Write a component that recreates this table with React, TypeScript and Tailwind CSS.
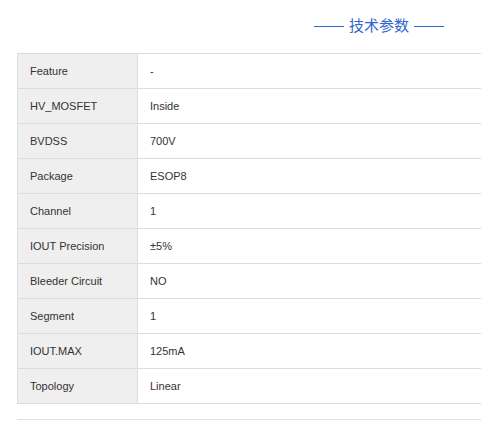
const params = [
  { label: 'Feature', value: '-' },
  { label: 'HV_MOSFET', value: 'Inside' },
  { label: 'BVDSS', value: '700V' },
  { label: 'Package', value: 'ESOP8' },
  { label: 'Channel', value: '1' },
  { label: 'IOUT Precision', value: '±5%' },
  { label: 'Bleeder Circuit', value: 'NO' },
  { label: 'Segment', value: '1' },
  { label: 'IOUT.MAX', value: '125mA' },
  { label: 'Topology', value: 'Linear' },
];

export default function App() {
  return (
    <div className="w-[481px] h-[430px] bg-white overflow-hidden font-['Liberation_Sans',Arial,sans-serif]">
      {/* Section title */}
      <div className="flex justify-end pr-[37px] pt-[15px] h-[53px]">
        <div className="flex items-center gap-[5px] h-[20px] text-[#2f66d0]">
          <span className="w-[30px] h-px bg-[#2f66d0] mt-[3px]" />
          <h2 className="text-[15px] leading-[20px] font-['Noto_Sans_CJK_SC',sans-serif]">技术参数</h2>
          <span className="w-[30px] h-px bg-[#2f66d0] mt-[3px]" />
        </div>
      </div>

      {/* Spec table */}
      <div className="ml-[17px]">
        <table className="w-[464px] border-collapse text-[11px] text-[#333]">
          <tbody>
            {params.map((p) => (
              <tr key={p.label} className="h-[35px]">
                <td className="w-[120px] bg-[#efefef] border border-[#dcdcdc] pl-[12px]">
                  {p.label}
                </td>
                <td className="border-y border-[#dcdcdc] pl-[12px]">{p.value}</td>
              </tr>
            ))}
          </tbody>
        </table>
        <div className="mt-[15px] h-px bg-[#e2e2e2]" />
      </div>
    </div>
  );
}
